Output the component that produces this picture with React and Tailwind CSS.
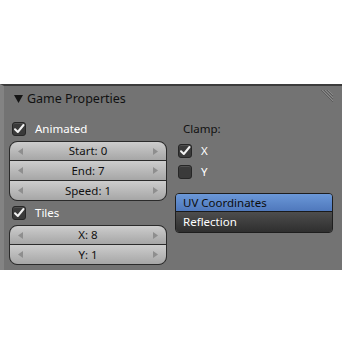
import React from "react";

const Check = ({ checked }) => (
  <div className="w-[14px] h-[14px] rounded-[3px] bg-[#3a3a3a] border border-[#262626] shadow-[inset_0_1px_0_#505050] flex items-center justify-center">
    {checked && (
      <svg width="12" height="12" viewBox="0 0 12 12">
        <path d="M2 6.2 L4.8 9 L10.5 2" stroke="#f2f2f2" strokeWidth="2" fill="none" strokeLinecap="round" strokeLinejoin="round" />
      </svg>
    )}
  </div>
);

const Arrow = ({ dir }) => (
  <svg width="5" height="7" viewBox="0 0 5 7">
    <path d={dir === "l" ? "M5 0 L0 3.5 L5 7 Z" : "M0 0 L5 3.5 L0 7 Z"} fill="#8e8e8e" />
  </svg>
);

const NumField = ({ label, first, last, h }) => (
  <div
    className={
      h +
      " flex items-center justify-between px-[8px] bg-gradient-to-b from-[#cdcdcd] to-[#a6a6a6] text-[#111] text-[11.5px] " +
      (first ? "rounded-t-[8px] " : "") +
      (last ? "rounded-b-[8px] " : "border-b border-[#2b2b2b]")
    }
  >
    <Arrow dir="l" />
    <span>{label}</span>
    <Arrow dir="r" />
  </div>
);

const FieldGroup = ({ items, heights }) => (
  <div className="border border-[#2b2b2b] rounded-[8px] overflow-hidden">
    {items.map((t, i) => (
      <NumField key={t} label={t} h={heights[i]} first={i === 0} last={i === items.length - 1} />
    ))}
  </div>
);

export default function App() {
  return (
    <div className="w-[342px] h-[342px] bg-white font-['Noto_Sans',sans-serif] overflow-hidden">
      <div className="h-[84px]" />
      <div className="relative h-[186px] bg-[#737373] border-t-2 border-[#3c3c3c] border-l-[4px] border-l-[#838383]">
        <div className="h-[26px] flex items-center pl-[10px] gap-[4px] text-[#111] text-[12.5px]">
          <svg width="9" height="8" viewBox="0 0 9 8">
            <path d="M0 0 L9 0 L4.5 8 Z" fill="#151515" />
          </svg>
          <span>Game Properties</span>
        </div>
        <svg className="absolute right-[8px] top-[3px]" width="16" height="16" viewBox="0 0 16 16">
          <path d="M3 1 L15 13 M6 1 L15 10 M9 1 L15 7" stroke="#5c5c5c" strokeWidth="1" />
          <path d="M4 1 L15 12 M7 1 L15 9 M10 1 L15 6" stroke="#8a8a8a" strokeWidth="1" />
        </svg>
        <div className="grid grid-cols-2 gap-[8px] pl-[5px] pr-[9px] pt-[5px]">
          <div className="flex flex-col">
            <div className="h-[24px] flex items-center pl-[3px] gap-[9px] text-white text-[11.5px]">
              <Check checked />
              <span>Animated</span>
            </div>
            <FieldGroup items={["Start: 0", "End: 7", "Speed: 1"]} heights={["h-[19px]", "h-[20px]", "h-[19px]"]} />
            <div className="h-[24px] flex items-center pl-[3px] gap-[9px] text-white text-[11.5px]">
              <Check checked />
              <span>Tiles</span>
            </div>
            <FieldGroup items={["X: 8", "Y: 1"]} heights={["h-[19px]", "h-[19px]"]} />
          </div>
          <div className="flex flex-col">
            <div className="h-[23px] flex items-center pl-[8px] text-[#111] text-[11.5px]">Clamp:</div>
            <div className="h-[21px] flex items-center pl-[3px] gap-[9px] text-white text-[11.5px]">
              <Check checked />
              <span>X</span>
            </div>
            <div className="h-[21px] flex items-center pl-[3px] gap-[9px] text-white text-[11.5px]">
              <Check />
              <span>Y</span>
            </div>
            <div className="mt-[11px] border border-[#1e1e1e] rounded-[4px] overflow-hidden text-[11.5px]">
              <div className="h-[18px] flex items-center px-[7px] bg-gradient-to-b from-[#6b98d8] to-[#4f78bc] text-[#0d0d0d] border-b border-[#1a1a1a]">
                UV Coordinates
              </div>
              <div className="h-[20px] flex items-center px-[7px] bg-gradient-to-b from-[#4d4d4d] to-[#2f2f2f] text-white">
                Reflection
              </div>
            </div>
          </div>
        </div>
      </div>
    </div>
  );
}
